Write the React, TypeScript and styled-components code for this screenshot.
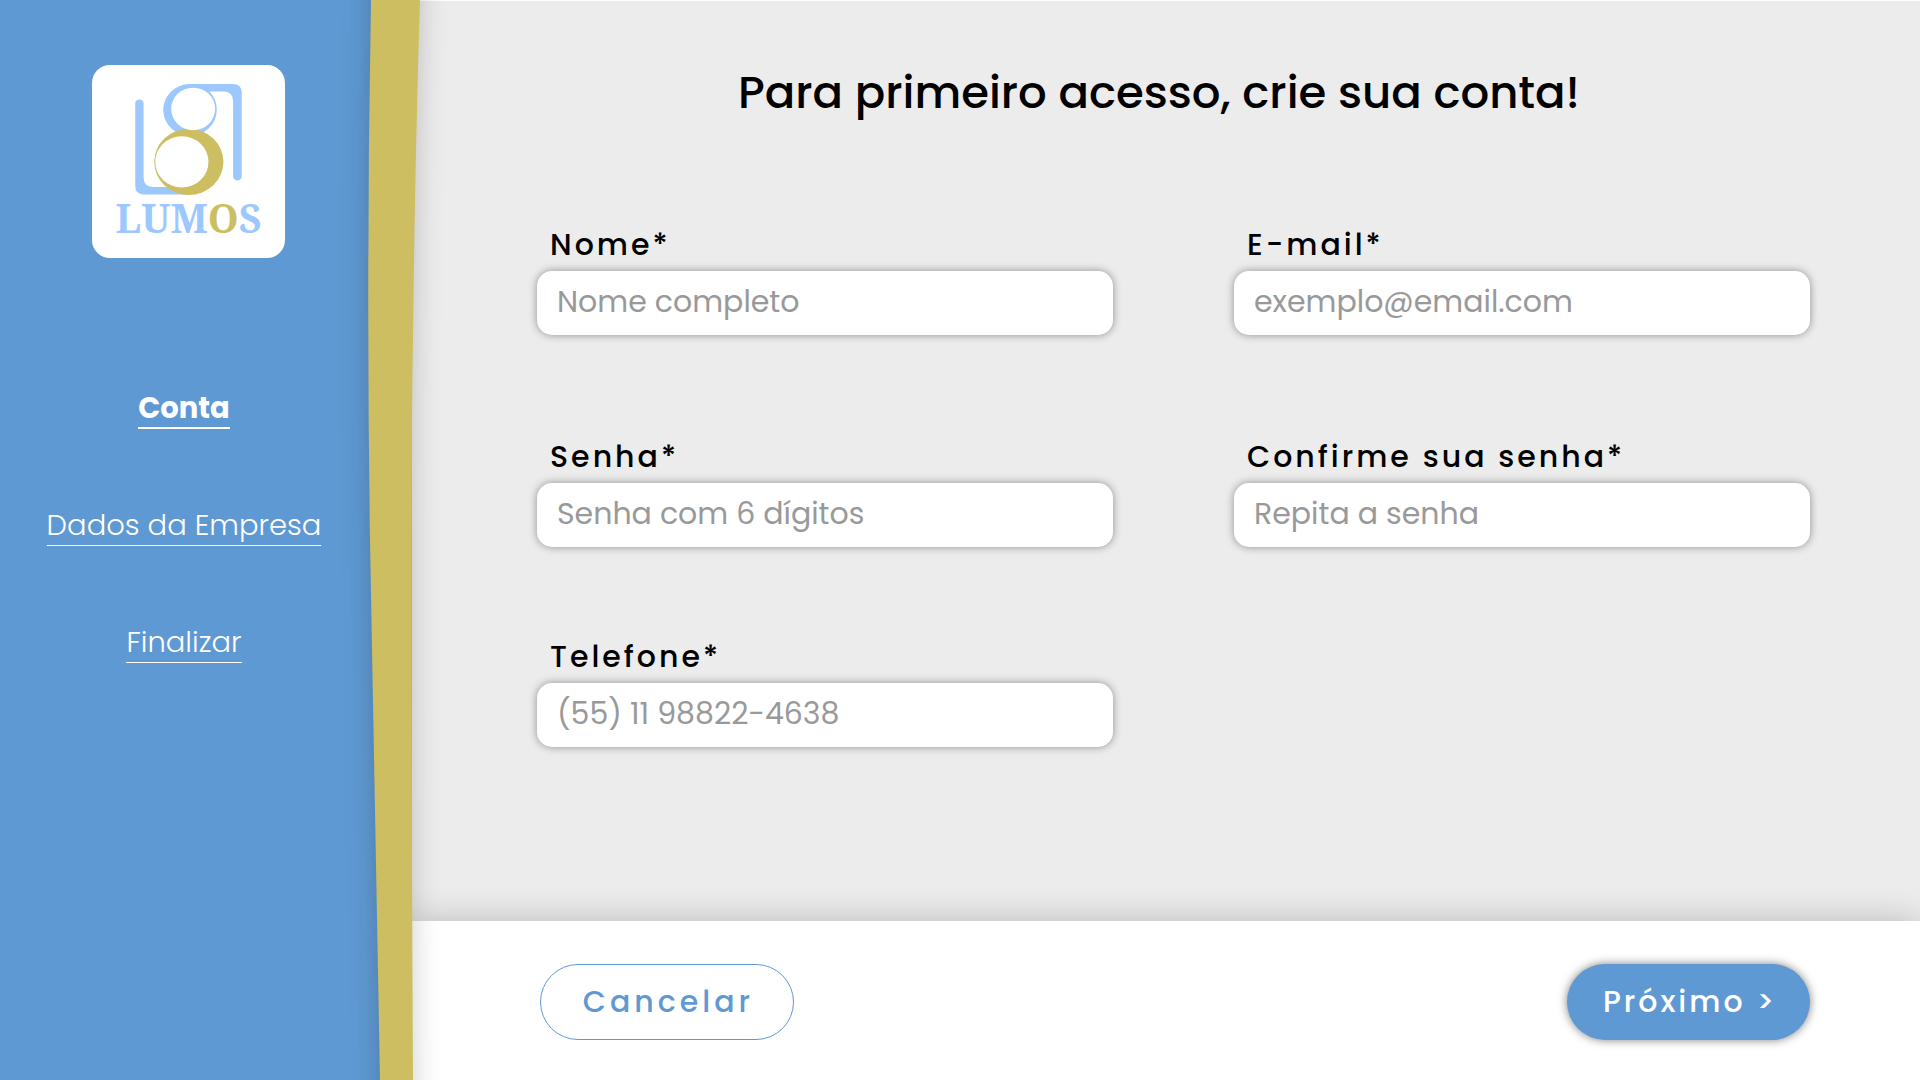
import React from "react";
import styled, { createGlobalStyle } from "styled-components";

const blue = "#5f99d3";
const lightBlue = "#9dc8fe";
const gold = "#cdbe62";

const GlobalStyle = createGlobalStyle`
  * { box-sizing: border-box; }
  body { margin: 0; font-family: Poppins, Inter, "Open Sans", sans-serif; }
`;

const Page = styled.div`
  position: relative;
  display: grid;
  grid-template-columns: 412px 1fr;
  min-height: 100vh;
  background: #ececec;
`;

const Sidebar = styled.aside`
  display: flex;
  flex-direction: column;
  align-items: center;
  padding: 65px 44px 0 0;
  background: linear-gradient(to right, ${blue} 0 390px, ${gold} 390px);
`;

const LogoCard = styled.div`
  align-self: flex-start;
  width: 193px;
  height: 193px;
  margin-left: 92px;
  border-radius: 18px;
  background: #fff;
  svg { display: block; width: 100%; height: 100%; }
`;

const Steps = styled.nav`
  display: flex;
  flex-direction: column;
  align-items: center;
  gap: 78px;
  margin-top: 132px;
`;

const StepLink = styled.a<{ $active?: boolean }>`
  height: 39px;
  line-height: 36px;
  font-size: 29px;
  font-weight: ${(p) => (p.$active ? 700 : 300)};
  color: #fff;
  text-decoration: none;
  white-space: nowrap;
  border-bottom: ${(p) => (p.$active ? 2 : 1)}px solid #fff;
`;

const Band = styled.svg`
  position: absolute;
  top: 0;
  left: 312px;
  width: 160px;
  height: 100%;
  pointer-events: none;
`;

const Main = styled.main`
  display: flex;
  flex-direction: column;
  border-top: 1px solid #fff;
`;

const Form = styled.form`
  flex: 1;
  display: flex;
  flex-direction: column;
`;

const Title = styled.h1`
  margin: 0;
  padding: 62px 139px 0 125px;
  text-align: center;
  font-size: 45px;
  line-height: 60px;
  font-weight: 500;
  color: #000;
`;

const Fields = styled.div`
  display: grid;
  grid-template-columns: 1fr 1fr;
  grid-template-rows: 212px 200px auto;
  column-gap: 121px;
  align-items: start;
  padding: 102px 110px 60px 125px;
`;

const Field = styled.div`
  display: flex;
  flex-direction: column;
`;

const Label = styled.label`
  height: 46px;
  padding-left: 13px;
  line-height: 40px;
  font-size: 30px;
  font-weight: 500;
  letter-spacing: 3px;
  color: #000;
`;

const Input = styled.input`
  width: 100%;
  height: 64px;
  padding: 0 20px 2px;
  border: 0;
  border-radius: 15px;
  background: #fff;
  box-shadow: 0 0 8px rgba(0, 0, 0, 0.4);
  font: inherit;
  font-size: 30px;
  color: #333;
  &::placeholder { color: #999; opacity: 1; }
`;

const Footer = styled.footer`
  display: flex;
  justify-content: space-between;
  align-items: center;
  height: 159px;
  margin-top: auto;
  padding: 2px 110px 0 128px;
  background: #fff;
  box-shadow: 0 0 32px rgba(0, 0, 0, 0.22);
`;

const Button = styled.button<{ $primary?: boolean }>`
  width: ${(p) => (p.$primary ? 243 : 254)}px;
  height: 76px;
  padding: 0 0 0 3px;
  border: ${(p) => (p.$primary ? "0" : `1px solid ${blue}`)};
  border-radius: 38px;
  background: ${(p) => (p.$primary ? blue : "#fff")};
  color: ${(p) => (p.$primary ? "#fff" : blue)};
  box-shadow: ${(p) => (p.$primary ? "0 0 10px rgba(0, 0, 0, 0.5)" : "none")};
  font: inherit;
  font-size: 30px;
  font-weight: 500;
  letter-spacing: ${(p) => (p.$primary ? 3 : 4)}px;
  cursor: pointer;
`;

const Logo = () => (
  <svg viewBox="35 43 580 580" role="img" aria-label="Lumos">
    <path
      d="M165 156A13 13 0 0 1 190 156V380Q190 410 222 410H325V432H190Q165 432 165 407Z"
      fill={lightBlue}
    />
    <path
      d="M325 100H459Q485 100 485 126V377A13 13 0 0 1 459 377V153Q459 123 429 123H388Q410 145 410 178A80.500 78 0 1 1 325 100Z"
      fill={lightBlue}
    />
    <ellipse cx="326" cy="334" rx="104" ry="99.500" fill={gold} />
    <ellipse cx="305" cy="334" rx="80" ry="77" fill="#fff" />
    <ellipse cx="339" cy="175" rx="66" ry="64" fill="#fff" />
    <text
      x="325"
      y="549"
      textAnchor="middle"
      fontFamily='"Noto Serif", "Liberation Serif", serif'
      fontWeight="700"
      fontSize="118"
      fill={lightBlue}
    >
      LUM<tspan fill={gold}>O</tspan>S
    </text>
  </svg>
);

const fields = [
  { id: "nome", label: "Nome*", type: "text", hint: "Nome completo" },
  { id: "email", label: "E-mail*", type: "email", hint: "exemplo@email.com" },
  { id: "senha", label: "Senha*", type: "password", hint: "Senha com 6 dígitos" },
  { id: "confirma", label: "Confirme sua senha*", type: "password", hint: "Repita a senha" },
  { id: "telefone", label: "Telefone*", type: "tel", hint: "(55) 11 98822-4638" },
];

export default function App() {
  return (
    <Page>
      <GlobalStyle />
      <Sidebar>
        <LogoCard>
          <Logo />
        </LogoCard>
        <Steps aria-label="Etapas do cadastro">
          <StepLink href="#conta" $active aria-current="step">Conta</StepLink>
          <StepLink href="#empresa">Dados da Empresa</StepLink>
          <StepLink href="#finalizar">Finalizar</StepLink>
        </Steps>
      </Sidebar>
      <Main>
        <Form onSubmit={(e) => e.preventDefault()}>
          <Title>Para primeiro acesso, crie sua conta!</Title>
          <Fields>
            {fields.map((f) => (
              <Field key={f.id}>
                <Label htmlFor={f.id}>{f.label}</Label>
                <Input id={f.id} type={f.type} placeholder={f.hint} />
              </Field>
            ))}
          </Fields>
          <Footer>
            <Button type="button">Cancelar</Button>
            <Button type="submit" $primary>Próximo &gt;</Button>
          </Footer>
        </Form>
      </Main>
      <Band viewBox="0 0 160 1080" preserveAspectRatio="none" aria-hidden="true">
        <defs>
          <filter
            id="bandShadow"
            filterUnits="userSpaceOnUse"
            x="0"
            y="-60"
            width="160"
            height="1200"
            colorInterpolationFilters="sRGB"
          >
            <feDropShadow dx="0" dy="0" stdDeviation="14" floodColor="#000" floodOpacity="0.2" />
          </filter>
        </defs>
        <path
          d="M59 -40V0Q54 270 58 540L68 1080V1120H101V1080Q98 500 101 340Q103 160 108 0V-40Z"
          fill={gold}
          filter="url(#bandShadow)"
        />
      </Band>
    </Page>
  );
}
